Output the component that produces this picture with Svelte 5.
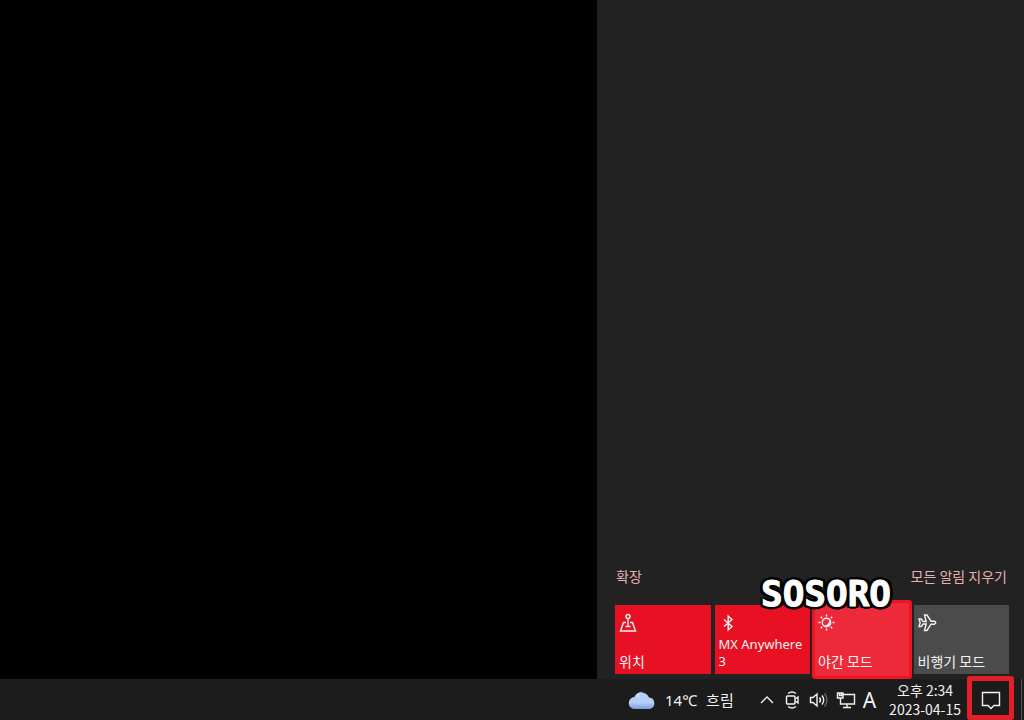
<script lang="ts">
	type Tile = {
		id: string;
		label: string;
		lang: 'ko' | 'en';
		on: boolean;
		marked?: boolean;
	};

	let tiles = $state<Tile[]>([
		{ id: 'location', label: '위치', lang: 'ko', on: true },
		{ id: 'bluetooth', label: 'MX Anywhere 3', lang: 'en', on: true },
		{ id: 'night', label: '야간 모드', lang: 'ko', on: true, marked: true },
		{ id: 'airplane', label: '비행기 모드', lang: 'ko', on: false }
	]);
</script>

<div class="screen">
	<main class="desktop">
		<aside class="action-center" aria-label="알림 센터">
			<div class="links">
				<button type="button">확장</button>
				<button type="button">모든 알림 지우기</button>
			</div>
			<div class="tiles">
				{#each tiles as tile (tile.id)}
					<button
						type="button"
						class="tile"
						class:on={tile.on}
						class:marked={tile.marked}
						class:latin={tile.lang === 'en'}
						aria-pressed={tile.on}
						onclick={() => (tile.on = !tile.on)}
					>
						<svg class="tile-icon" viewBox="0 0 20 20" aria-hidden="true">
							{#if tile.id === 'location'}
								<circle cx="9" cy="3.500" r="2" />
								<path d="M9 5.500V13M7 9.500H4.500L1.500 18h15l-3-8.500H11M6.500 13.500h5" />
							{:else if tile.id === 'bluetooth'}
								<path d="M5 6.500l8 7-3.800 3.500V3L13 6.500l-8 7" />
							{:else if tile.id === 'night'}
								<circle cx="8.500" cy="9.500" r="4.200" />
								<path class="solid" d="M11.500 6A4.600 4.600 0 1 1 5 12.500C9 13 11.500 10 11.500 6z" />
								<path d="M8.500 1.500v2M8.500 15.500v2M.5 9.500h2M14.500 9.500h2M2.800 3.800l1.400 1.400M12.800 13.800l1.400 1.400M2.800 15.200l1.400-1.400M12.800 5.200l1.400-1.400" />
							{:else}
								<path d="M1 6h2.200l2 2.500h3L6.500 2H9l4 6.200h3.500q2.500 1.500 0 3H13L9 17.500H6.500L8.200 11h-3l-2 2.500H1l1.200-3.800z" />
							{/if}
						</svg>
						<span>{tile.label}</span>
					</button>
				{/each}
			</div>
			<strong class="watermark">SOSORO</strong>
		</aside>
	</main>

	<footer class="taskbar">
		<button type="button" class="weather">
			<svg width="28" height="20" viewBox="0 0 28 20" aria-hidden="true">
				<defs>
					<linearGradient id="cloud" x1="0" y1="0" x2="0" y2="1">
						<stop offset="0" stop-color="#b2cdf5" />
						<stop offset="0.6" stop-color="#b9cff5" />
						<stop offset="1" stop-color="#799ee0" />
					</linearGradient>
				</defs>
				<path fill="url(#cloud)" d="M7 19a6 6 0 0 1-.5-12A8 8 0 0 1 21 7.500 5.800 5.800 0 0 1 21.500 19z" />
				<path fill="#d2e1fb" opacity=".6" d="M6.500 7A8 8 0 0 1 16 2C11 3 10 7 13 10 11 7.500 9 7 6.500 7z" />
			</svg>
			<span>14℃</span>
			<span>흐림</span>
		</button>

		<div class="tray">
			<button type="button" aria-label="숨겨진 아이콘 표시">
				<svg width="16" height="20" viewBox="0 0 16 20"><path d="M2 13l6-6 6 6" /></svg>
			</button>
			<button type="button" aria-label="카메라">
				<svg width="20" height="20" viewBox="0 0 20 20">
					<path d="M6 3.500q4-3 8 0M6 16.500q4 3 8 0M13 9l3-2v6l-3-2" />
					<rect x="4.500" y="6" width="8.500" height="8" rx="1" />
				</svg>
			</button>
			<button type="button" aria-label="볼륨">
				<svg width="20" height="20" viewBox="0 0 20 20">
					<path d="M1.500 7.500H4L8 4v12l-4-3.500H1.500zM10.500 7.500q2 2.500 0 5M13 5.500q3.500 4.500 0 9" />
					<path class="faint" d="M15.500 3.500q5 6.500 0 13" />
				</svg>
			</button>
			<button type="button" aria-label="네트워크">
				<svg width="20" height="20" viewBox="0 0 20 20">
					<path d="M7 4.500h11.500v9.500H4.500V8M7 17.500h8M11 14v3.500M1.500 3h5.500v5H1.500zM3.500 3v2.500h2V3" />
				</svg>
			</button>
			<button type="button" class="ime" aria-label="입력 언어">A</button>
		</div>

		<button type="button" class="clock">
			<time datetime="2023-04-15T14:34">오후 2:34<br />2023-04-15</time>
		</button>

		<button type="button" class="notifications" aria-label="알림">
			<svg width="20" height="20" viewBox="0 0 20 20" aria-hidden="true">
				<path d="M1.500 2.500h17v13H13l-3 3-3-3H1.500z" />
			</svg>
		</button>
		<button type="button" class="show-desktop" aria-label="바탕 화면 보기"></button>
	</footer>
</div>

<style>
	:global(body) {
		margin: 0;
		background: #000;
	}

	.screen {
		display: flex;
		flex-direction: column;
		min-height: 100vh;
		font-family: 'Noto Sans CJK KR', 'Noto Sans', sans-serif;
		font-size: 14px;
		line-height: 18px;
		color: #f2f2f2;
	}

	button {
		margin: 0;
		padding: 0;
		border: 0;
		background: none;
		color: inherit;
		font: inherit;
		cursor: default;
	}

	svg {
		display: block;
		fill: none;
		stroke: #f2f2f2;
		stroke-width: 1.4;
	}

	.desktop {
		display: flex;
		flex: 1;
		justify-content: flex-end;
		background: #000;
	}

	.action-center {
		position: relative;
		display: flex;
		flex-direction: column;
		justify-content: flex-end;
		box-sizing: border-box;
		width: 427px;
		padding: 0 15px 5px 18px;
		background: #222;
	}

	.links {
		display: flex;
		justify-content: space-between;
		padding: 0 2px 20px 1px;
		color: #e7b0b2;
	}

	.tiles {
		display: grid;
		grid-template-columns: repeat(4, 1fr);
		gap: 4px;
	}

	.tile {
		position: relative;
		z-index: 0;
		display: flex;
		flex-direction: column;
		justify-content: space-between;
		align-items: flex-start;
		min-height: 69px;
		padding: 8px 4px 4px;
		background: #4b4b4b;
		line-height: 17px;
		text-align: left;
	}

	.tile.on {
		background: #e81123;
	}

	.tile.latin {
		font-family: 'Noto Sans', sans-serif;
		font-size: 13px;
	}

	.tile.marked::after {
		content: '';
		position: absolute;
		z-index: -1;
		inset: -5px -2px;
		box-sizing: border-box;
		border: 3px solid #ee1523;
		border-radius: 3px;
		background: #ec2a3a;
	}

	.tile-icon {
		flex: none;
		width: 20px;
		height: 20px;
	}

	.solid {
		fill: #f2f2f2;
		stroke: none;
	}

	.watermark {
		position: absolute;
		z-index: 1;
		right: 133px;
		bottom: 67px;
		color: #fff;
		font: 900 36px/36px 'DejaVu Sans Mono', monospace;
		-webkit-text-stroke: 1px #fff;
		text-shadow:
			-3px -2px #000,
			0 -3px #000,
			3px -2px #000,
			3px 0 #000,
			3px 2px #000,
			0 3px #000,
			-3px 2px #000,
			-3px 0 #000;
	}

	.taskbar {
		display: flex;
		justify-content: flex-end;
		height: 41px;
		background: #1c1c1c;
	}

	.weather {
		display: flex;
		align-items: center;
		gap: 9px;
		margin-right: 25px;
		font-family: 'Noto Sans', 'Noto Sans CJK KR', sans-serif;
		font-size: 15px;
	}

	.weather svg {
		stroke: none;
	}

	.tray {
		display: flex;
		align-items: center;
		gap: 7px;
		margin-right: 13px;
	}

	.faint {
		stroke: #666;
	}

	.ime {
		font-family: 'Noto Sans', sans-serif;
		font-size: 21px;
	}

	.clock {
		margin-right: 6px;
		line-height: 19px;
		text-align: center;
	}

	.notifications {
		position: relative;
		display: grid;
		place-items: center;
		width: 47px;
	}

	.notifications::after {
		content: '';
		position: absolute;
		inset: -3px 0 0;
		border: 5px solid #e3202a;
		border-radius: 3px;
	}

	.show-desktop {
		width: 3px;
		margin-left: 7px;
		border-left: 1px solid #555;
	}
</style>
